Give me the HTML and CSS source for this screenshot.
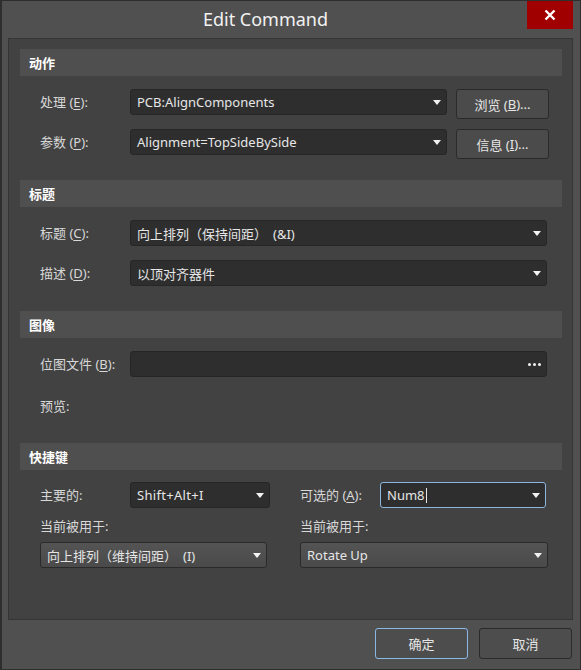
FILE: index.html
```html
<!DOCTYPE html>
<html lang="zh">
<head>
<meta charset="utf-8">
<title>Edit Command</title>
<link rel="stylesheet" href="styles.css">
</head>
<body>
<div class="window">
  <div class="titlebar">
    <div class="title">Edit Command</div>
    <div class="close">
      <svg width="12" height="12" viewBox="0 0 12 12"><path d="M1.5 1.5 L10.5 10.5 M10.5 1.5 L1.5 10.5" stroke="#fff" stroke-width="2.4" fill="none"/></svg>
    </div>
  </div>
  <div class="panel">
    <div class="sec-head">动作</div>
    <div class="sec-body s1">
      <div class="row">
        <div class="label">处理 (<u>E</u>):</div>
        <div class="combo w316"><span>PCB:AlignComponents</span><i class="arrow"></i></div>
        <div class="btn side">浏览 (<u>B</u>)...</div>
      </div>
      <div class="row">
        <div class="label">参数 (<u>P</u>):</div>
        <div class="combo w316"><span>Alignment=TopSideBySide</span><i class="arrow"></i></div>
        <div class="btn side">信息 (<u>I</u>)...</div>
      </div>
    </div>

    <div class="sec-head">标题</div>
    <div class="sec-body s2">
      <div class="row">
        <div class="label">标题 (<u>C</u>):</div>
        <div class="combo wide"><span>向上排列（保持间距）<span class="gap"></span>(&amp;I)</span><i class="arrow"></i></div>
      </div>
      <div class="row">
        <div class="label">描述 (<u>D</u>):</div>
        <div class="combo wide"><span>以顶对齐器件</span><i class="arrow"></i></div>
      </div>
    </div>

    <div class="sec-head">图像</div>
    <div class="sec-body s3">
      <div class="row">
        <div class="label">位图文件 (<u>B</u>):</div>
        <div class="combo wide"><span></span><i class="dots"><b></b><b></b><b></b></i></div>
      </div>
      <div class="label preview">预览:</div>
    </div>

    <div class="sec-head">快捷键</div>
    <div class="sec-body s4">
      <div class="cols">
        <div class="col left">
          <div class="row">
            <div class="label">主要的:</div>
            <div class="combo w140"><span class="wide-latin">Shift+Alt+I</span><i class="arrow"></i></div>
          </div>
          <div class="label used">当前被用于:</div>
          <div class="combo light lw"><span>向上排列（维持间距）<span class="gap"></span>(I)</span><i class="arrow"></i></div>
        </div>
        <div class="col right">
          <div class="row">
            <div class="label lab80">可选的 (<u>A</u>):</div>
            <div class="combo focus w166"><span>Num8<em class="caret"></em></span><i class="arrow"></i></div>
          </div>
          <div class="label used">当前被用于:</div>
          <div class="combo light rw"><span>Rotate Up</span><i class="arrow"></i></div>
        </div>
      </div>
    </div>
  </div>
  <div class="footer">
    <div class="btn foot ok">确定</div>
    <div class="btn foot">取消</div>
  </div>
</div>
</body>
</html>
```

FILE: styles.css
```css
* { box-sizing: border-box; }
html, body { margin: 0; padding: 0; background: #2c2c2c; }
body {
  font-family: "Noto Sans", "Noto Sans CJK SC", sans-serif;
  font-size: 13px;
  color: #dedede;
}
.window {
  width: 581px;
  height: 670px;
  background: #505050;
  border: 1px solid #2e2e2e;
  border-left-width: 2px;
  display: flex;
  flex-direction: column;
}
.titlebar {
  height: 37px;
  display: flex;
  align-items: flex-start;
}
.title {
  flex: 1;
  text-align: center;
  font-size: 18px;
  line-height: 36px;
  color: #f2f2f2;
  padding-left: 2px;
}
.close {
  width: 46px;
  height: 28px;
  background: #a00000;
  display: flex;
  align-items: center;
  justify-content: center;
  margin-right: 7px;
}
.panel {
  margin: 0 7px 0 6px;
  height: 582px;
  background: #424242;
  border: 1px solid #353535;
  padding: 10px 10px 0 11px;
}
.sec-head {
  height: 27px;
  background: #4f4f4f;
  color: #ffffff;
  font-weight: bold;
  line-height: 27px;
  padding-left: 9px;
  font-family: "Noto Sans CJK SC", sans-serif;
}
.sec-body { padding-left: 20px; }
.s1 { padding-top: 13px; padding-bottom: 21px; display: flex; flex-direction: column; gap: 10px; }
.s2 { padding-top: 13px; padding-bottom: 25px; display: flex; flex-direction: column; gap: 14px; }
.s3 { padding-top: 13px; padding-bottom: 0; height: 105px; }
.s4 { padding-top: 12px; }
.row { display: flex; align-items: flex-start; }
.label {
  width: 90px;
  flex: none;
  line-height: 26px;
  color: #d8d8d8;
  white-space: nowrap;
}
.label u { text-decoration-thickness: 1px; text-underline-offset: 2px; }
.combo {
  position: relative;
  height: 26px;
  background: #2e2e2e;
  border: 1px solid #262626;
  border-radius: 3px;
  display: flex;
  align-items: center;
  padding-left: 6px;
  color: #e6e6e6;
  white-space: nowrap;
  flex: none;
}
.combo > span { flex: 1; }
.gap { display: inline-block; width: 6px; }
.wide-latin { letter-spacing: 0.3px; }
.arrow {
  position: absolute;
  right: 5px;
  top: 10px;
  width: 0;
  height: 0;
  border-left: 4px solid transparent;
  border-right: 4px solid transparent;
  border-top: 5px solid #f2f2f2;
}
.dots {
  position: absolute;
  right: 5px;
  top: 11px;
  display: flex;
  gap: 2px;
}
.dots b { width: 3px; height: 3px; background: #f2f2f2; border-radius: 50%; display: block; }
.w316 { width: 317px; }
.wide { width: 417px; }
.w140 { width: 140px; }
.w166 { width: 166px; }
.lw { width: 227px; }
.rw { width: 248px; }
.btn {
  background: #4b4b4b;
  border: 1px solid #2a2a2a;
  border-radius: 3px;
  color: #e6e6e6;
  display: flex;
  align-items: center;
  justify-content: center;
  white-space: nowrap;
}
.side { width: 93px; height: 30px; margin-left: 9px; }
.preview { margin-top: 16px; }
.cols { display: flex; }
.col { display: flex; flex-direction: column; }
.col.left { width: 260px; }
.lab80 { width: 80px; }
.used { line-height: 20px; margin-top: 8px; margin-bottom: 6px; height: 20px; }
.light {
  background: linear-gradient(#545454, #4a4a4a);
  border-color: #2a2a2a;
}
.focus { border-color: #8db6de; }
.caret {
  display: inline-block;
  width: 1px;
  height: 15px;
  background: #e6e6e6;
  vertical-align: -3px;
  margin-left: 1px;
}
.footer {
  flex: 1;
  display: flex;
  justify-content: flex-end;
  align-items: flex-start;
  padding-top: 8px;
  padding-right: 8px;
  gap: 11px;
}
.foot { width: 93px; height: 31px; background: #4d4d4d; }
.ok { border-color: #8ab8e6; }
```
